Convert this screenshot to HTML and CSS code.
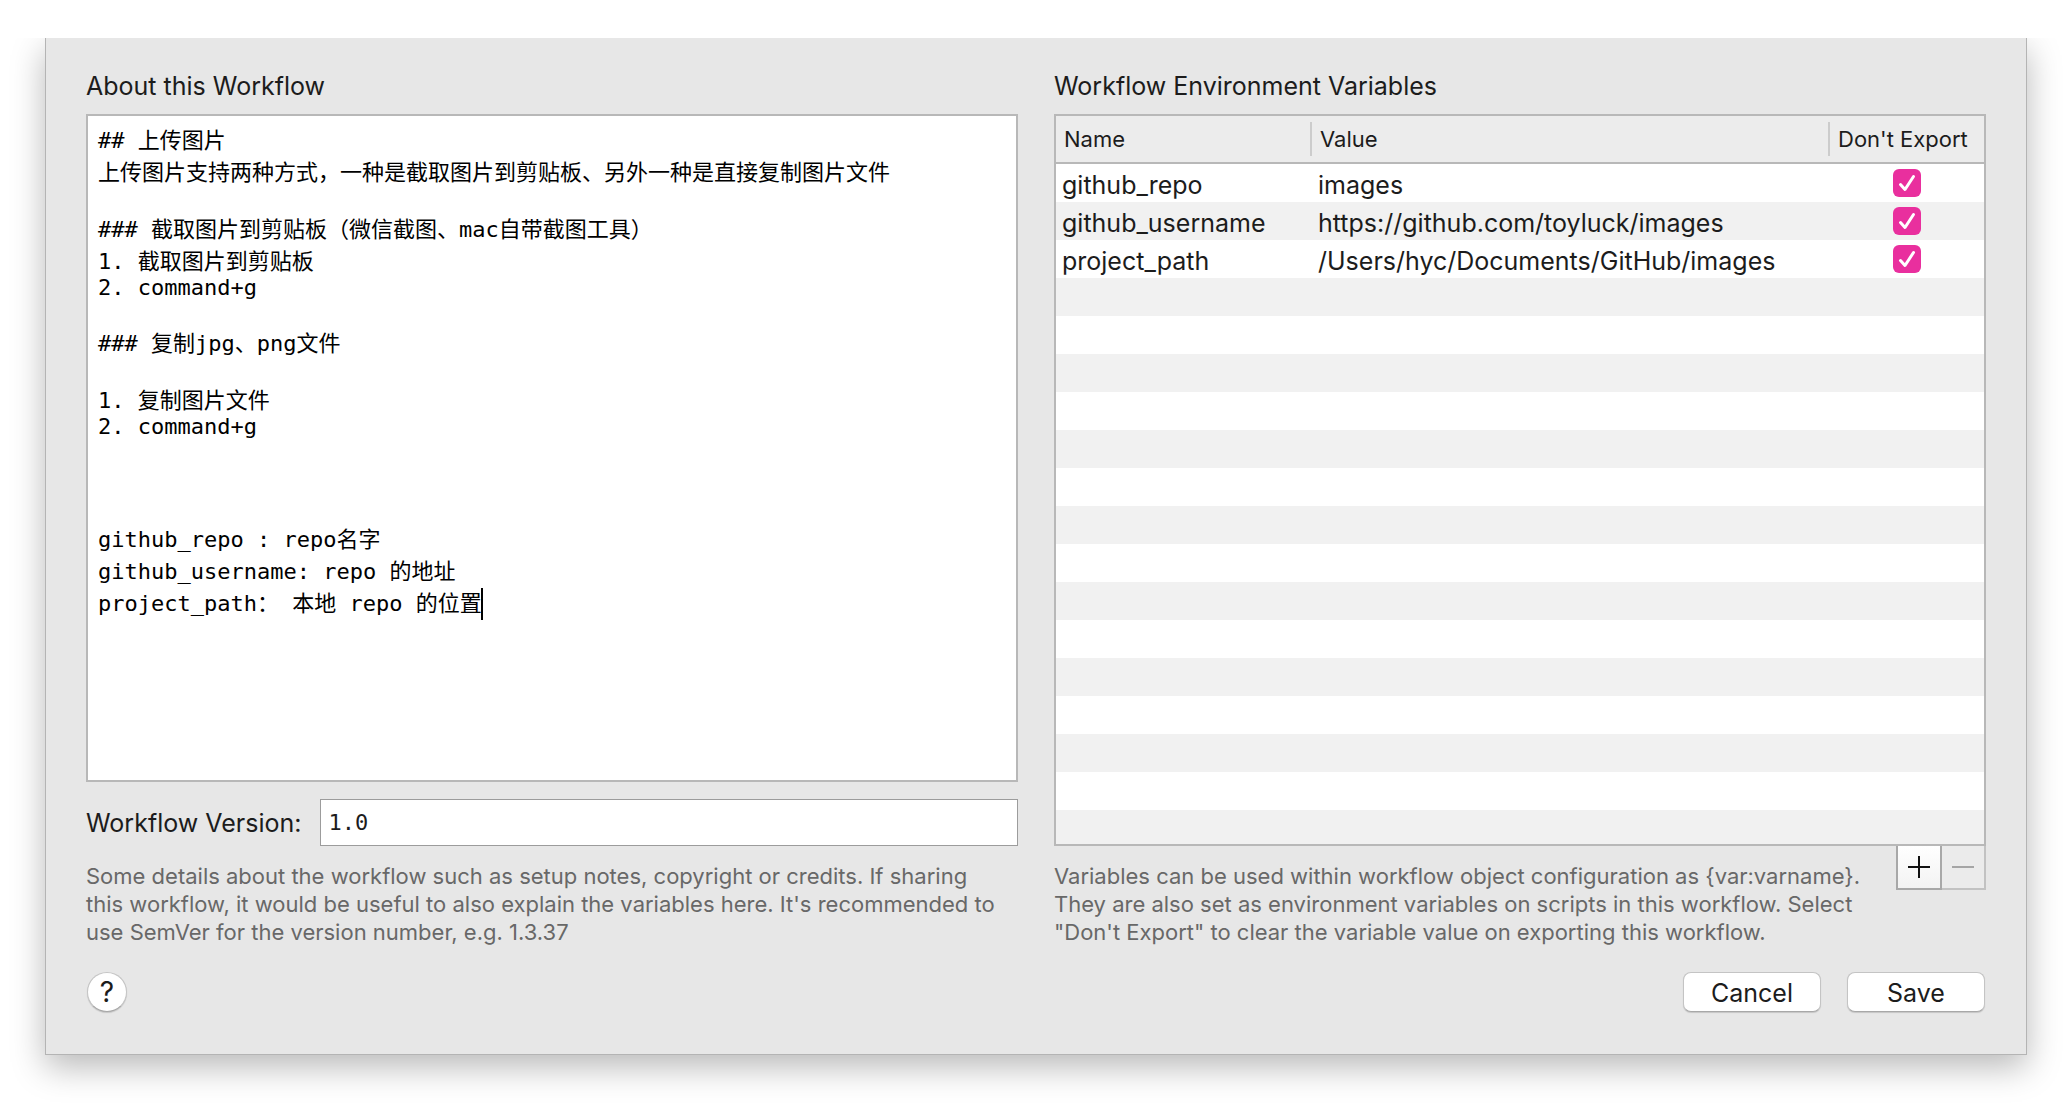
FILE: index.html
```html
<!DOCTYPE html>
<html lang="en">
<head>
<meta charset="utf-8">
<title>Workflow Settings</title>
<link rel="stylesheet" href="styles.css">
</head>
<body>
<form class="sheet">
  <div class="columns">
    <section class="column">
      <label class="heading" for="about">About this Workflow</label>
      <div class="about">
        <textarea class="about-text" id="about" spellcheck="false">## 上传图片
上传图片支持两种方式，一种是截取图片到剪贴板、另外一种是直接复制图片文件

### 截取图片到剪贴板（微信截图、mac自带截图工具）
1. 截取图片到剪贴板
2. command+g

### 复制jpg、png文件

1. 复制图片文件
2. command+g

&#x3000;

github_repo : repo名字
github_username: repo 的地址
project_path： 本地 repo 的位置</textarea>
        <span class="caret"></span>
      </div>
      <div class="version">
        <label class="version-label" for="version">Workflow Version:</label>
        <input class="version-input" id="version" type="text" value="1.0">
      </div>
    </section>
    <section class="column">
      <h2 class="heading" id="vars-title">Workflow Environment Variables</h2>
      <div class="table-panel">
        <table class="vars" aria-labelledby="vars-title">
          <colgroup><col class="col-name"><col><col class="col-export"></colgroup>
          <thead>
            <tr><th>Name</th><th>Value</th><th>Don't Export</th></tr>
          </thead>
          <tbody>
            <tr>
              <td>github_repo</td><td>images</td>
              <td><span class="check"><input type="checkbox" checked aria-label="Don't export github_repo"><svg viewBox="0 0 28 28"><path d="M7.500 15.500l4.500 5L20.500 7.500"/></svg></span></td>
            </tr>
            <tr>
              <td>github_username</td><td>https://github.com/toyluck/images</td>
              <td><span class="check"><input type="checkbox" checked aria-label="Don't export github_username"><svg viewBox="0 0 28 28"><path d="M7.500 15.500l4.500 5L20.500 7.500"/></svg></span></td>
            </tr>
            <tr>
              <td>project_path</td><td>/Users/hyc/Documents/GitHub/images</td>
              <td><span class="check"><input type="checkbox" checked aria-label="Don't export project_path"><svg viewBox="0 0 28 28"><path d="M7.500 15.500l4.500 5L20.500 7.500"/></svg></span></td>
            </tr>
          </tbody>
        </table>
      </div>
    </section>
  </div>
  <div class="notes">
    <p class="note">Some details about the workflow such as setup notes, copyright or credits. If sharing<br>this workflow, it would be useful to also explain the variables here. It's recommended to<br>use SemVer for the version number, e.g. 1.3.37</p>
    <div class="note-row">
      <p class="note">Variables can be used within workflow object configuration as {var:varname}.<br>They are also set as environment variables on scripts in this workflow. Select<br>"Don't Export" to clear the variable value on exporting this workflow.</p>
      <div class="row-buttons">
        <button class="add" type="button" aria-label="Add variable"><svg viewBox="0 0 22 22"><path d="M0 11h22M11 0v22"/></svg></button>
        <button class="remove" type="button" aria-label="Remove variable" disabled><svg viewBox="0 0 22 22"><path d="M0 11h22"/></svg></button>
      </div>
    </div>
  </div>
  <footer class="footer">
    <button class="help" type="button">?</button>
    <div class="actions">
      <button class="action" type="button">Cancel</button>
      <button class="action" type="submit">Save</button>
    </div>
  </footer>
</form>
</body>
</html>
```
FILE: styles.css
```css
* { box-sizing: border-box; }

body {
  margin: 0;
  min-height: 100vh;
  display: flex;
  flex-direction: column;
  background: #fff;
  color: #1c1c1c;
  font-family: Inter, "Noto Sans CJK SC", sans-serif;
  font-size: 25px;
}

button, input, textarea { font: inherit; color: inherit; margin: 0; }

.sheet {
  flex: 1;
  display: flex;
  flex-direction: column;
  margin: 38px 45px 53px;
  padding: 32px 40px 42px;
  background: #e7e7e7;
  border: 1px solid #b4b4b4;
  border-top: 0;
  box-shadow: 0 12px 32px rgba(0, 0, 0, 0.28);
  clip-path: inset(0 -60px -60px);
}

.columns, .notes {
  display: grid;
  grid-template-columns: 1fr 1fr;
  column-gap: 36px;
}

.columns { flex: 1; }
.column { display: flex; flex-direction: column; min-width: 0; }

.heading {
  margin: 0 0 12px;
  font-size: 25px;
  font-weight: 400;
  line-height: 32px;
}

.about { position: relative; flex: 1; display: flex; }

.about-text {
  flex: 1;
  padding: 6px 10px;
  border: 2px solid #b8b8b8;
  background: #fff;
  color: #000;
  font-family: "DejaVu Sans Mono", "Noto Sans CJK SC", monospace;
  font-size: 22px;
  line-height: normal;
  resize: none;
  outline: 0;
}

.caret {
  position: absolute;
  left: 395px;
  top: 474px;
  width: 2px;
  height: 32px;
  background: #000;
}

.version { display: flex; align-items: center; gap: 19px; margin-top: 17px; }
.version-label { line-height: 32px; }

.version-input {
  flex: 1;
  min-width: 0;
  height: 47px;
  padding: 0 7px;
  border: 1px solid #9c9c9c;
  background: #fff;
  font-family: "DejaVu Sans Mono", monospace;
  font-size: 22px;
}

.table-panel {
  flex: 1;
  border: 2px solid #b8b8b8;
  background: repeating-linear-gradient(#fff 0 38px, #f1f1f1 38px 76px) 0 48px no-repeat;
}

.vars { width: 100%; border-collapse: separate; border-spacing: 0; table-layout: fixed; }
.col-name { width: 256px; }
.col-export { width: 154px; }

.vars th {
  height: 48px;
  padding: 0 8px;
  border-bottom: 2px solid #b8b8b8;
  background: linear-gradient(#ccc, #ccc) right center / 2px 34px no-repeat #ececec;
  font-size: 22px;
  font-weight: 400;
  text-align: left;
  white-space: nowrap;
}
.vars th:last-child { background: #ececec; }

.vars td { height: 38px; padding: 4px 6px 0; line-height: 34px; white-space: nowrap; }
.vars td:last-child { padding: 0; }

.check { display: grid; justify-content: center; }
.check input, .check svg { grid-area: 1 / 1; width: 28px; height: 28px; }
.check input { appearance: none; border-radius: 6px; background: #e92f9e; }
.check svg {
  pointer-events: none;
  fill: none;
  stroke: #fff;
  stroke-width: 3;
  stroke-linecap: round;
  stroke-linejoin: round;
}

.note { margin: 0; padding-top: 16px; font-size: 22px; line-height: 28px; color: #686868; white-space: nowrap; }
.note-row { display: flex; justify-content: space-between; align-items: flex-start; }

.row-buttons { display: flex; }
.row-buttons button {
  display: flex;
  align-items: center;
  justify-content: center;
  width: 45px;
  height: 44px;
  padding: 0;
  border: 2px solid #a8a8a8;
  border-top: 0;
}
.row-buttons svg { width: 22px; height: 22px; stroke: #111; stroke-width: 2; }
.row-buttons .add { width: 46px; background: linear-gradient(#fff, #f3f3f3); }
.row-buttons .remove { width: 44px; border-color: #c2c2c2; border-left: 0; background: #ebebeb; }
.row-buttons .remove svg { stroke: #a5a5a5; }

.footer { display: flex; align-items: center; justify-content: space-between; margin-top: 26px; padding: 0 1px; }

.help {
  width: 40px;
  height: 40px;
  padding: 0;
  border: 1px solid #c4c4c4;
  border-bottom-color: #a8a8a8;
  border-radius: 50%;
  background: #fff;
  box-shadow: 0 1px 1px rgba(0, 0, 0, 0.15);
  font-size: 28px;
  line-height: 36px;
}

.actions { display: flex; gap: 26px; }
.action {
  width: 138px;
  height: 40px;
  padding: 2px 0 0;
  border: 1px solid #c4c4c4;
  border-bottom-color: #a8a8a8;
  border-radius: 8px;
  background: #fff;
  box-shadow: 0 1px 1px rgba(0, 0, 0, 0.15);
  line-height: 36px;
}
```
